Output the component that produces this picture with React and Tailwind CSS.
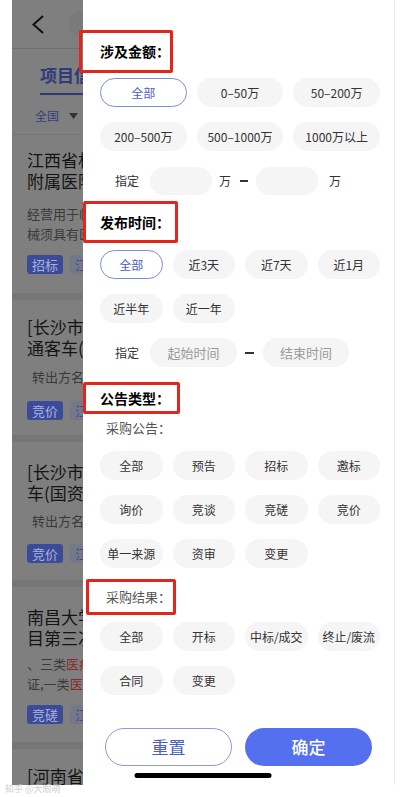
import React from "react";

const font = { fontFamily: '"Noto Sans CJK SC", "Noto Sans", sans-serif' };

const Chip = ({ label, active }) => (
  <div
    className={
      "h-[29px] rounded-full flex items-center justify-center text-[12px] " +
      (active
        ? "bg-white border border-[#7d8bd3] text-[#4a5cc5]"
        : "bg-[#f5f5f5] text-[#333]")
    }
  >
    {label}
  </div>
);

const Card = ({ lines, desc, tag, pt, descMt, tagMt, pb }) => (
  <div className={`px-[15px] ${pt} ${pb}`}>
    {lines.map((l) => (
      <div key={l} className="text-[17px] leading-[21px] text-[#141414] whitespace-nowrap">
        {l}
      </div>
    ))}
    <div className={`${descMt} text-[13px] leading-[20px] text-[#3a3a3a] whitespace-nowrap`}>
      {desc}
    </div>
    <div className={`${tagMt} flex gap-[7px]`}>
      <span className="h-[19px] px-[5px] rounded-[3px] bg-[#3c4b99] text-[#aab3e0] text-[13px] leading-[19px]">
        {tag}
      </span>
      <span className="h-[19px] px-[5px] rounded-[3px] bg-[#747887] text-[#3c4b99] text-[13px] leading-[19px]">
        江西
      </span>
    </div>
  </div>
);

const Sep = () => <div className="h-[7px] bg-[#767676]" />;

const Title = ({ children, box }) => (
  <div className={`border-[3px] border-[#e3261c] rounded-[2px] flex items-center ${box}`}>
    {children}
  </div>
);

export default function App() {
  return (
    <div className="w-[407px] h-[797px] bg-white relative overflow-hidden" style={font}>
      <div className="ml-[12px] w-[383px] h-[785px] relative overflow-hidden border-r border-[#ececec]">
        {/* dimmed list page, only its left strip shows beside the drawer */}
        <div className="absolute top-0 bottom-0 left-0 w-[71px] overflow-hidden bg-[#7f7f7f]">
          <div className="w-[383px]">
            <div className="h-[49px] border-b border-[#707070] flex items-center">
              <svg width="12" height="19" viewBox="0 0 12 19" className="ml-[20px]">
                <polyline points="11,1 1.5,9.5 11,18" fill="none" stroke="#111" strokeWidth="2" />
              </svg>
              <div className="ml-[25px] h-[26px] w-[300px] rounded-full bg-[#7a7a7a]" />
            </div>
            <div className="h-[49px] pl-[28px] pt-[16px]">
              <div className="text-[17px] font-bold text-[#2e3a7a] leading-[20px] whitespace-nowrap">项目信息</div>
              <div className="mt-[8px] h-[2px] w-[80px] bg-[#2e3a7a]" />
            </div>
            <div className="h-[37px] border-b border-[#767676] pl-[23px] flex items-center text-[12px] text-[#34407e]">
              全国
              <svg width="9" height="6" viewBox="0 0 9 6" className="ml-[10px]">
                <polygon points="0,0 9,0 4.5,6" fill="#333" />
              </svg>
            </div>
            <Card
              lines={["江西省机关", "附属医院"]}
              desc={<>经营用于临<br />械须具有医</>}
              tag="招标"
              pt="pt-[14px]"
              descMt="mt-[13px]"
              tagMt="mt-[11px]"
              pb="pb-[19px]"
            />
            <Sep />
            <Card
              lines={["[长沙市]", "通客车(国"]}
              desc={<span className="pl-[5px]">转出方名称</span>}
              tag="竞价"
              pt="pt-[16px]"
              descMt="mt-[9px]"
              tagMt="mt-[14px]"
              pb="pb-[15px]"
            />
            <Sep />
            <Card
              lines={["[长沙市]", "车(国资监"]}
              desc={<span className="pl-[5px]">转出方名称</span>}
              tag="竞价"
              pt="pt-[19px]"
              descMt="mt-[8px]"
              tagMt="mt-[13px]"
              pb="pb-[17px]"
            />
            <Sep />
            <Card
              lines={["南昌大学附", "目第三次"]}
              desc={
                <>
                  、三类<span className="text-[#8a2a2a]">医疗</span>
                  <br />
                  证,一类<span className="text-[#8a2a2a]">医疗</span>
                </>
              }
              tag="竞磋"
              pt="pt-[19px]"
              descMt="mt-[6px]"
              tagMt="mt-[11px]"
              pb="pb-[18px]"
            />
            <Sep />
            <div className="px-[15px] pt-[16px] text-[17px] leading-[21px] text-[#141414] whitespace-nowrap">
              [河南省·
            </div>
          </div>
        </div>

        {/* filter drawer */}
        <div className="absolute top-0 bottom-0 left-[71px] right-0 bg-white flex flex-col">
          <Title box="mt-[30px] -ml-[4px] w-[94px] h-[43px] pl-[18px]">
            <span className="text-[14px] font-bold text-black">涉及金额：</span>
          </Title>
          <div className="ml-[17px] w-[280px] mt-[5px] grid grid-cols-3 gap-x-[10px] gap-y-[15px]">
            <Chip label="全部" active />
            <Chip label="0–50万" />
            <Chip label="50–200万" />
            <Chip label="200–500万" />
            <Chip label="500–1000万" />
            <Chip label="1000万以上" />
          </div>
          <div className="mt-[16px] ml-[32px] flex items-center text-[12px] text-[#333]">
            <span>指定</span>
            <div className="ml-[11px] w-[62px] h-[28px] rounded-full bg-[#f5f5f5]" />
            <span className="ml-[7px]">万</span>
            <div className="ml-[9px] w-[8px] h-[2px] bg-[#333]" />
            <div className="ml-[8px] w-[62px] h-[28px] rounded-full bg-[#f5f5f5]" />
            <span className="ml-[11px]">万</span>
          </div>

          <Title box="mt-[6px] w-[95px] h-[42px] pl-[14px]">
            <span className="text-[14px] font-bold text-black">发布时间：</span>
          </Title>
          <div className="ml-[17px] w-[280px] mt-[7px] grid grid-cols-4 gap-x-[10px] gap-y-[15px]">
            <Chip label="全部" active />
            <Chip label="近3天" />
            <Chip label="近7天" />
            <Chip label="近1月" />
            <Chip label="近半年" />
            <Chip label="近一年" />
          </div>
          <div className="mt-[15px] ml-[32px] flex items-center text-[12px] text-[#333]">
            <span>指定</span>
            <div className="ml-[11px] w-[87px] h-[29px] rounded-full bg-[#f5f5f5] flex items-center justify-center text-[13px] text-[#999]">
              起始时间
            </div>
            <div className="ml-[8px] w-[9px] h-[2px] bg-[#333]" />
            <div className="ml-[9px] w-[86px] h-[29px] rounded-full bg-[#f5f5f5] flex items-center justify-center text-[13px] text-[#999]">
              结束时间
            </div>
          </div>

          <Title box="mt-[15px] w-[97px] h-[32px] pl-[14px]">
            <span className="text-[14px] font-bold text-black">公告类型：</span>
          </Title>
          <div className="mt-[5px] ml-[23px] h-[18px] leading-[18px] text-[13px] text-[#555]">采购公告：</div>
          <div className="ml-[17px] w-[280px] mt-[14px] grid grid-cols-4 gap-x-[10px] gap-y-[15px]">
            {["全部", "预告", "招标", "邀标", "询价", "竞谈", "竞磋", "竞价", "单一来源", "资审", "变更"].map((t) => (
              <Chip key={t} label={t} />
            ))}
          </div>

          <Title box="mt-[11px] ml-[3px] w-[90px] h-[36px] pl-[17px]">
            <span className="text-[13px] text-[#555]">采购结果：</span>
          </Title>
          <div className="ml-[17px] w-[280px] mt-[7px] grid grid-cols-4 gap-x-[10px] gap-y-[15px]">
            {["全部", "开标", "中标/成交", "终止/废流", "合同", "变更"].map((t) => (
              <Chip key={t} label={t} />
            ))}
          </div>

          <div className="mt-auto mb-[19px] ml-[22px] flex gap-[13px]">
            <button className="w-[127px] h-[38px] rounded-full border border-[#8d9ad6] text-[17px] text-[#4a5fc1] bg-white">
              重置
            </button>
            <button className="w-[127px] h-[38px] rounded-full bg-[#5470ef] text-[17px] font-medium text-white">
              确定
            </button>
          </div>
        </div>

        <div className="absolute bottom-[7px] left-1/2 -translate-x-1/2 w-[137px] h-[5px] rounded-full bg-black" />
      </div>
      <div className="absolute left-[5px] bottom-[3px] text-[9px] text-[#cfcfcf] leading-[11px]">知乎 @大眼萌</div>
    </div>
  );
}
